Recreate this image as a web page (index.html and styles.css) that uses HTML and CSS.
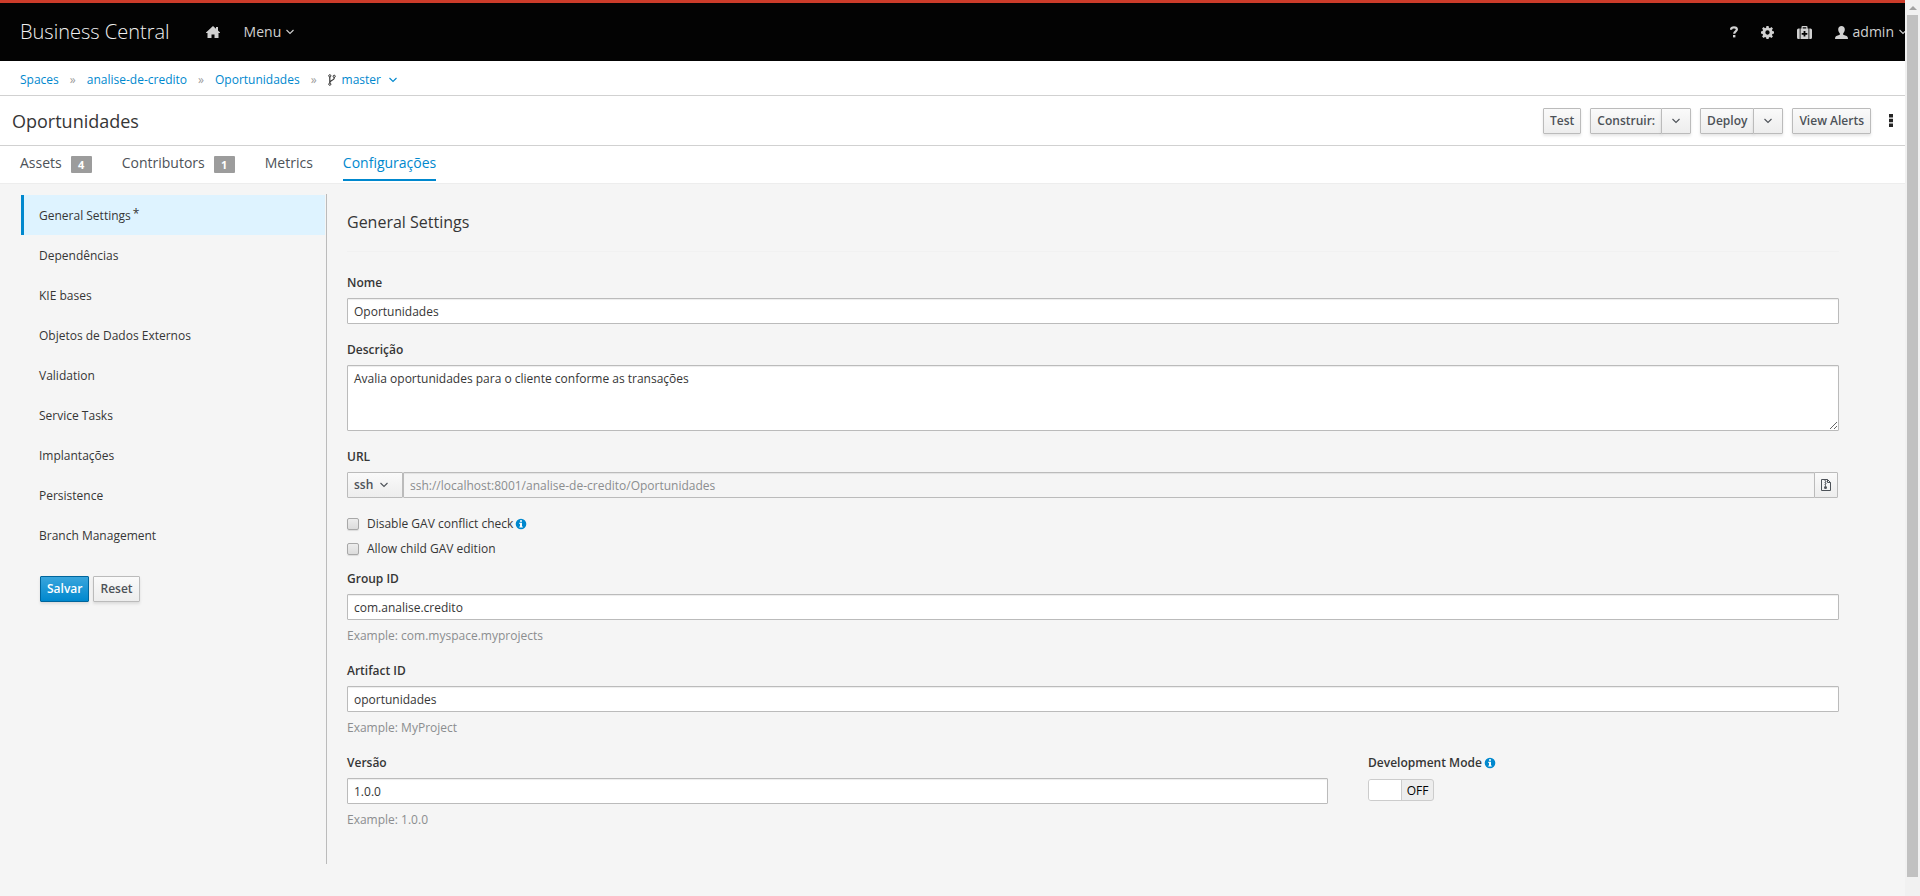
FILE: index.html
```html
<!DOCTYPE html>
<html lang="pt-BR">
<head>
<meta charset="utf-8">
<title>Business Central</title>
<link rel="stylesheet" href="styles.css">
</head>
<body>
<svg class="sprite" aria-hidden="true">
  <symbol id="chevron" viewBox="0 0 8 6"><path d="M.5 1 4 4.500 7.500 1" fill="none" stroke="currentColor" stroke-width="1.1"/></symbol>
  <symbol id="info" viewBox="0 0 12 12"><circle cx="6" cy="6" r="5.300" fill="currentColor"/><path d="M5 2.200h2v1.600H5zM4.300 4.800H7v3.600h.8v1.200H4.300V8.400H5V6h-.7z" fill="#fff"/></symbol>
</svg>
<div class="app">
  <div class="page">
    <header class="masthead">
      <a class="brand" href="#">Business Central</a>
      <a class="home" href="#" aria-label="Home"><svg width="14" height="12" viewBox="0 0 14 12"><path d="M7 0 0 6.500V7h1.500v5h4V8.500h3V12h4V7H14v-.5l-2-1.900V1h-2v1.700z" fill="currentColor"/></svg></a>
      <button class="top-link" type="button">Menu <svg class="chev"><use href="#chevron"/></svg></button>
      <div class="tools">
        <button class="top-link" type="button" aria-label="Help"><svg width="8" height="12" viewBox="0 0 8 12"><path d="M1 3.700C1 1.900 2.200 1.300 4 1.300s2.900.8 2.900 2.300C6.900 5.400 4.200 5.300 4.200 7.700" fill="none" stroke="currentColor" stroke-width="2.200"/><path d="M3 9h2.400v2.400H3z" fill="currentColor"/></svg></button>
        <button class="top-link" type="button" aria-label="Settings"><svg width="13" height="13" viewBox="0 0 12 12"><path fill-rule="evenodd" fill="currentColor" d="M5 0h2l.3 1.600 1 .4L9.600 1 11 2.400 10.100 3.700l.4 1L12 5v2l-1.500.3-.4 1L11 9.600 9.600 11l-1.300-.9-1 .4L7 12H5l-.3-1.500-1-.4L2.400 11 1 9.600l.9-1.300-.4-1L0 7V5l1.500-.3.400-1L1 2.400 2.400 1l1.300 1 1-.4zM6 4a2 2 0 1 0 0 4 2 2 0 0 0 0-4z"/></svg></button>
        <button class="top-link" type="button" aria-label="Support"><svg width="15" height="13" viewBox="0 0 15 13"><path fill-rule="evenodd" fill="currentColor" d="M4.500 2.500V1q0-1 1-1h4q1 0 1 1v1.500h1V13h-8V2.500zM5.700 1.200v1.300h3.600V1.200zM6.600 5v1.900H4.700v1.800h1.900v1.900h1.800V8.700h1.900V6.900H8.400V5z"/><path d="M2.700 2.500V13H1.500Q0 13 0 11.500V4q0-1.500 1.500-1.500zM12.300 2.500V13h1.200q1.500 0 1.500-1.500V4q0-1.500-1.500-1.500z" fill="currentColor"/></svg></button>
        <button class="top-link" type="button"><svg width="13" height="13" viewBox="0 0 13 13"><path d="M6.500 0C4.500 0 3.200 1.300 3.200 3.300c0 1.700.6 3 1.600 3.900v1.500L1.300 10Q0 10.600 0 13h13q0-2.400-1.300-3L8.200 8.700V7.200c1-.9 1.600-2.200 1.600-3.900C9.800 1.300 8.500 0 6.500 0z" fill="currentColor"/></svg>admin<svg class="chev"><use href="#chevron"/></svg></button>
      </div>
    </header>

    <nav class="crumbs" aria-label="Breadcrumb">
      <a href="#">Spaces</a><span class="sep">»</span>
      <a href="#">analise-de-credito</a><span class="sep">»</span>
      <a href="#">Oportunidades</a><span class="sep">»</span>
      <a class="branch" href="#"><svg class="fork" width="8" height="12" viewBox="0 0 8 12"><path d="M1.800 2.500v7M6.200 3v1.200C6.200 6.400 1.800 6 1.800 8.600" fill="none" stroke="currentColor" stroke-width="1.200"/><g fill="#fff" stroke="currentColor"><circle cx="1.800" cy="1.800" r="1.100"/><circle cx="6.200" cy="2.300" r="1.100"/><circle cx="1.800" cy="10.200" r="1.100"/></g></svg>master<svg class="chev"><use href="#chevron"/></svg></a>
    </nav>

    <div class="titlebar">
      <h1>Oportunidades</h1>
      <div class="actions">
        <button class="btn" type="button">Test</button>
        <div class="split"><button class="btn" type="button">Construir:</button><button class="btn caret" type="button" aria-label="Construir options"><svg class="chev"><use href="#chevron"/></svg></button></div>
        <div class="split"><button class="btn" type="button">Deploy</button><button class="btn caret" type="button" aria-label="Deploy options"><svg class="chev"><use href="#chevron"/></svg></button></div>
        <button class="btn" type="button">View Alerts</button>
        <button class="kebab" type="button" aria-label="More"><svg width="4" height="13" viewBox="0 0 4 13"><path d="M0 0h4v3.400H0zM0 4.800h4v3.400H0zM0 9.600h4V13H0z" fill="currentColor"/></svg></button>
      </div>
    </div>

    <nav class="tabs" aria-label="Project">
      <a href="#">Assets<span class="badge">4</span></a>
      <a href="#">Contributors<span class="badge">1</span></a>
      <a href="#">Metrics</a>
      <a class="active" href="#" aria-current="page">Configurações</a>
    </nav>

    <main class="content">
      <aside class="side">
        <nav class="side-nav" aria-label="Settings">
          <a class="active" href="#">General Settings<span class="star">*</span></a>
          <a href="#">Dependências</a>
          <a href="#">KIE bases</a>
          <a href="#">Objetos de Dados Externos</a>
          <a href="#">Validation</a>
          <a href="#">Service Tasks</a>
          <a href="#">Implantações</a>
          <a href="#">Persistence</a>
          <a href="#">Branch Management</a>
        </nav>
        <div class="side-actions">
          <button class="btn primary" type="submit" form="settings">Salvar</button>
          <button class="btn" type="reset" form="settings">Reset</button>
        </div>
      </aside>

      <form class="settings" id="settings">
        <h2>General Settings</h2>
        <div class="field"><label for="nome">Nome</label><input class="text" id="nome" type="text" value="Oportunidades"></div>
        <div class="field"><label for="desc">Descrição</label><textarea class="text" id="desc">Avalia oportunidades para o cliente conforme as transações</textarea></div>
        <div class="field">
          <label for="url">URL</label>
          <div class="url">
            <button class="btn proto" type="button">ssh<svg class="chev"><use href="#chevron"/></svg></button>
            <input class="text" id="url" type="text" value="ssh://localhost:8001/analise-de-credito/Oportunidades" disabled>
            <button class="btn copy" type="button" aria-label="Copy"><svg width="10" height="12" viewBox="0 0 10 12"><path d="M.5.5h6l3 3v8h-9zM6.500.5v3h3" fill="none" stroke="currentColor"/><path d="M4 1v1h1v1H4v1h1v1H4v1M4.500 5.500v2" fill="none" stroke="currentColor" stroke-width=".8"/><circle cx="4.500" cy="8.400" r="1.500" fill="currentColor"/></svg></button>
          </div>
        </div>
        <div class="checks">
          <label><input type="checkbox">Disable GAV conflict check<svg class="info"><use href="#info"/></svg></label>
          <label><input type="checkbox">Allow child GAV edition</label>
        </div>
        <div class="field"><label for="group">Group ID</label><input class="text" id="group" type="text" value="com.analise.credito"><p class="help">Example: com.myspace.myprojects</p></div>
        <div class="field"><label for="artifact">Artifact ID</label><input class="text" id="artifact" type="text" value="oportunidades"><p class="help">Example: MyProject</p></div>
        <div class="row">
          <div class="field"><label for="versao">Versão</label><input class="text" id="versao" type="text" value="1.0.0"><p class="help">Example: 1.0.0</p></div>
          <div class="field">
            <label for="dev">Development Mode<svg class="info"><use href="#info"/></svg></label>
            <button class="switch" id="dev" type="button" role="switch" aria-checked="false"><span class="knob"></span><span class="state">OFF</span></button>
          </div>
        </div>
      </form>
    </main>
  </div>
  <div class="scrollbar" aria-hidden="true"><span class="arrow"></span><span class="thumb"></span></div>
</div>
</body>
</html>
```

FILE: styles.css
```css
* { box-sizing: border-box; }

body {
  margin: 0;
  background: #f5f5f5;
  color: #363636;
  font: 12px/20px "Open Sans", "Noto Sans", sans-serif;
}

a { color: #0088ce; text-decoration: none; }
button, input, textarea { font: inherit; color: inherit; }
button { cursor: pointer; }
svg { flex: none; }

.sprite { position: absolute; width: 0; height: 0; }
.chev { width: 8px; height: 6px; }
.info { width: 12px; height: 12px; color: #0088ce; }

.app { display: flex; min-height: 100vh; }
.page { flex: 1; min-width: 0; overflow: hidden; }

/* Masthead */
.masthead {
  display: flex;
  align-items: center;
  height: 61px;
  padding-left: 20px;
  border-top: 3px solid #cc3c2a;
  background: #030303;
  color: #d1d1d1;
  font-size: 14px;
}
.brand { color: #f1f1f1; font-size: 20px; font-weight: 300; line-height: 30px; }
.masthead a { flex: none; }
.home { display: flex; margin-left: 36px; color: #d1d1d1; }
.masthead .home + .top-link { margin-left: 24px; }
.top-link {
  display: flex;
  align-items: center;
  gap: 5px;
  padding: 0;
  border: 0;
  background: none;
}
.tools { display: flex; align-items: center; gap: 23px; margin-left: auto; margin-right: -2px; }

/* Breadcrumb */
.crumbs {
  display: flex;
  align-items: center;
  height: 35px;
  padding: 4px 20px 0;
  border-bottom: 1px solid #d1d1d1;
  background: #fff;
}
.sep { margin: 0 11px; color: #9c9c9c; }
.branch { display: flex; align-items: center; }
.fork { margin-right: 6px; color: #363636; }
.branch .chev { margin-left: 8px; }

/* Title and actions */
.titlebar {
  display: flex;
  align-items: center;
  justify-content: space-between;
  height: 50px;
  padding: 0 12px;
  border-bottom: 1px solid #d1d1d1;
  background: #fff;
}
h1 { margin: 0; font-size: 18px; font-weight: 400; line-height: 24px; }
.actions { display: flex; align-items: center; gap: 9px; }
.btn {
  display: inline-flex;
  align-items: center;
  justify-content: center;
  height: 26px;
  padding: 0 6px;
  border: 1px solid #bbb;
  border-radius: 1px;
  background: linear-gradient(#fafafa, #ededed);
  box-shadow: 0 2px 3px rgba(3, 3, 3, .1);
  color: #4d5258;
  font-weight: 600;
}
.primary { border-color: #00659c; background: linear-gradient(#39a5dc, #0088ce); color: #fff; }
.split { display: flex; }
.split .caret { width: 30px; margin-left: -1px; }
.kebab { display: flex; padding: 0; margin-left: 9px; border: 0; background: none; color: #252525; }

/* Tabs */
.tabs {
  display: flex;
  gap: 30px;
  height: 38px;
  padding: 0 20px;
  border-bottom: 1px solid #ededed;
  background: #fff;
  font-size: 14px;
}
.tabs a { display: flex; height: 35px; padding-top: 7px; color: #4d5258; }
.tabs .active { border-bottom: 2px solid #0088ce; color: #0088ce; }
.badge {
  width: 21px;
  height: 17px;
  margin: 3px 0 0 9px;
  border-radius: 1px;
  background: #9c9c9c;
  color: #fff;
  font-size: 11px;
  font-weight: 700;
  line-height: 18px;
  text-align: center;
}

/* Settings layout */
.content { display: flex; padding: 10px 66px 32px 21px; }
.side { width: 306px; padding: 1px 1px 0 0; border-right: 1px solid #bbb; }
.side-nav a {
  display: block;
  padding: 11px 15px 9px;
  border-left: 3px solid transparent;
  color: #363636;
}
.side-nav .active { border-color: #0088ce; background: #def3ff; }
.star { margin-left: 2px; vertical-align: 2px; line-height: 12px; }
.side-actions { display: flex; gap: 4px; padding: 21px 19px; }

.settings { flex: 1; min-width: 0; padding: 16px 0 19px 20px; }
h2 {
  margin: 0 0 21px;
  padding-bottom: 17px;
  border-bottom: 1px solid #f1f1f1;
  font-size: 16px;
  font-weight: 400;
  line-height: 24px;
}
.field { margin-bottom: 16px; }
.field label { display: flex; align-items: center; gap: 2px; margin-bottom: 5px; font-weight: 600; }
.text {
  display: block;
  width: 100%;
  height: 26px;
  padding: 2px 6px;
  border: 1px solid #bbb;
  border-radius: 1px;
  background: #fff;
  box-shadow: inset 0 1px 1px rgba(3, 3, 3, .075);
}
textarea.text { height: 66px; padding-top: 3px; resize: vertical; }
.help { margin: 6px 0 0; color: #8b8d8f; }
.field:has(.help) { margin-bottom: 15px; }

.url { display: flex; padding-right: 1px; }
.url .btn { box-shadow: none; }
.url .text { flex: 1; min-width: 0; background: #f5f5f5; color: #8b8d8f; }
.url .proto { width: 56px; gap: 7px; justify-content: flex-start; }
.url .copy { width: 24px; margin-left: -1px; padding: 0; }

.checks { display: grid; gap: 5px; margin-bottom: 10px; }
.checks label { display: flex; align-items: center; gap: 2px; }
.checks input {
  width: 12px;
  height: 12px;
  margin: 0 6px 0 0;
  appearance: none;
  border: 1px solid #a8a8a8;
  border-radius: 2px;
  background: linear-gradient(#ededed, #dcdcdc);
  box-shadow: 0 1px 1px rgba(3, 3, 3, .1);
}

.row { display: grid; grid-template-columns: 25fr 12fr; gap: 40px; }
.row .field { min-width: 0; }
.row .switch {
  display: flex;
  width: 66px;
  height: 22px;
  margin-top: 6px;
  padding: 0;
  overflow: hidden;
  border: 1px solid #ccc;
  border-radius: 3px;
  background: #ededed;
  color: #030303;
}
.knob { width: 33px; align-self: stretch; border-right: 1px solid #ccc; background: #fff; }
.state { flex: 1; line-height: 22px; }

/* Window scrollbar */
.scrollbar {
  display: flex;
  flex-direction: column;
  align-items: center;
  width: 15px;
  padding: 6px 0 19px;
  background: #f1f1f1;
}
.arrow { border: 4px solid transparent; border-top: 0; border-bottom: 4px solid #a3a3a3; }
.thumb { flex: 1; width: 11px; margin-top: 5px; background: #c1c1c1; }
```
